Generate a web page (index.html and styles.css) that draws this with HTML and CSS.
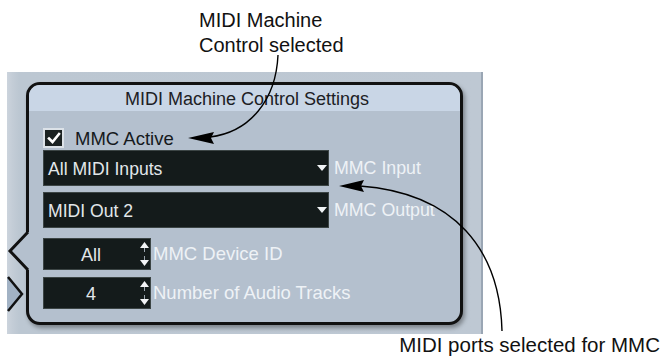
FILE: index.html
```html
<!DOCTYPE html>
<html>
<head>
<meta charset="utf-8">
<link rel="stylesheet" href="styles.css">
</head>
<body>
<div class="page">
  <div class="note-top">MIDI Machine<br>Control selected</div>
  <div class="panel">
    <div class="box">
      <div class="box-title">MIDI Machine Control Settings</div>
      <div class="box-body">
        <div class="check-row">
          <span class="check">
            <svg width="14" height="14" viewBox="0 0 14 14"><path d="M2 7.5 L5.5 11 L12 3" fill="none" stroke="#ffffff" stroke-width="2.6" stroke-linecap="square"/></svg>
          </span>
          <span class="check-label">MMC Active</span>
        </div>
        <div class="field-row select-row">
          <div class="select"><span class="select-val">All MIDI Inputs</span><span class="caret"></span></div>
          <span class="label">MMC Input</span>
        </div>
        <div class="field-row select-row second">
          <div class="select"><span class="select-val">MIDI Out 2</span><span class="caret"></span></div>
          <span class="label">MMC Output</span>
        </div>
        <div class="field-row spin-row">
          <div class="spin"><span class="spin-val">All</span>
            <svg class="spin-btns" width="12" height="30" viewBox="0 0 12 30"><path d="M2 9 L6.5 3 L11 9 Z" fill="#f2f4f6"/><path d="M6.5 9 V13" stroke="#9aa4ad" stroke-width="1"/><path d="M2 21 L6.5 27 L11 21 Z" fill="#f2f4f6"/><path d="M6.5 17 V21" stroke="#9aa4ad" stroke-width="1"/></svg>
          </div>
          <span class="label">MMC Device ID</span>
        </div>
        <div class="field-row spin-row second">
          <div class="spin"><span class="spin-val">4</span>
            <svg class="spin-btns" width="12" height="30" viewBox="0 0 12 30"><path d="M2 9 L6.5 3 L11 9 Z" fill="#f2f4f6"/><path d="M6.5 9 V13" stroke="#9aa4ad" stroke-width="1"/><path d="M2 21 L6.5 27 L11 21 Z" fill="#f2f4f6"/><path d="M6.5 17 V21" stroke="#9aa4ad" stroke-width="1"/></svg>
          </div>
          <span class="label">Number of Audio Tracks</span>
        </div>
      </div>
    </div>
  </div>
  <div class="note-bottom">MIDI ports selected for MMC</div>
  <svg class="overlay" width="661" height="357" viewBox="0 0 661 357">
    <!-- left notch "<" -->
    <polygon points="31,232 27,232 10,251 27,270 31,270" fill="#b4c0ce"/>
    <polyline points="28,232 10,251 28,270" fill="none" stroke="#111" stroke-width="3" stroke-linejoin="miter"/>
    <!-- right pointing tab ">" -->
    <polygon points="7,277 22,294 7,311" fill="#a2b2c4"/>
    <polyline points="8,277 22,294 8,311" fill="none" stroke="#111" stroke-width="2.5"/>
    <!-- arrow 1 -->
    <path d="M278 55 C 276 100, 250 132, 210 137" fill="none" stroke="#000" stroke-width="1.4"/>
    <polygon points="188,138 214,132 211,138 214,144" fill="#000"/>
    <!-- arrow 2 -->
    <path d="M502 331 C 500 250, 455 193, 360 186" fill="none" stroke="#000" stroke-width="1.4"/>
    <polygon points="339,186 364,180 361,186 364,192" fill="#000"/>
  </svg>
</div>
</body>
</html>
```
FILE: styles.css
```css
html, body {
  margin: 0;
  padding: 0;
  background: #ffffff;
}
.page {
  position: relative;
  width: 661px;
  height: 357px;
  overflow: hidden;
  font-family: "Liberation Sans", Arial, sans-serif;
}
.note-top {
  box-sizing: border-box;
  height: 72px;
  padding: 8px 0 0 199px;
  font-size: 20px;
  line-height: 25px;
  color: #111;
}
.panel {
  box-sizing: border-box;
  margin-left: 7px;
  width: 476px;
  height: 262px;
  padding: 10px 18px 9px 19px;
  background: linear-gradient(to right, #ccd4dd 0, #c4cdd7 5px, #bcc7d2 12px, #bec8d3 100%);
  border-right: 2px solid #9aa6b4;
}
.box {
  box-sizing: border-box;
  height: 243px;
  border: 3px solid #111;
  border-radius: 14px;
  background: #b4c0ce;
  overflow: hidden;
  box-shadow: 2px 3px 4px rgba(0, 0, 0, 0.35);
}
.box-title {
  height: 26px;
  line-height: 29px;
  background: #c9d6e6;
  text-align: center;
  font-size: 18px;
  color: #1c2024;
  padding-left: 5px;
}
.box-body {
  display: flex;
  flex-direction: column;
  padding: 17px 0 0 14px;
}
.check-row {
  display: flex;
  align-items: center;
  height: 20px;
  gap: 11px;
  margin-bottom: 2px;
}
.check {
  box-sizing: border-box;
  width: 21px;
  height: 20px;
  border: 2px solid #dce2e8;
  background: #1b2222;
  display: flex;
  align-items: center;
  justify-content: center;
}
.check-label {
  font-size: 18.5px;
  color: #15191c;
  position: relative;
  top: 1px;
}
.field-row {
  display: flex;
  align-items: center;
}
.select-row.second {
  margin-top: 6px;
}
.select {
  box-sizing: border-box;
  width: 286px;
  height: 36px;
  background: #141b1b;
  border: 1px solid #3c4545;
  display: flex;
  align-items: center;
  justify-content: space-between;
  padding: 0 0 0 4px;
}
.select-val {
  font-size: 17.6px;
  color: #e2e7ea;
  position: relative;
  top: 1px;
}
.caret {
  width: 0;
  height: 0;
  border-left: 5px solid transparent;
  border-right: 5px solid transparent;
  border-top: 6px solid #f0f3f5;
  margin-right: 1px;
}
.label {
  font-size: 17.8px;
  color: #eef2f6;
  margin-left: 5px;
  white-space: nowrap;
}
.spin-row {
  margin-top: 10px;
}
.spin-row.second {
  margin-top: 7px;
}
.spin {
  box-sizing: border-box;
  width: 108px;
  height: 32px;
  background: #141b1b;
  border: 1px solid #3c4545;
  display: flex;
  align-items: center;
}
.spin-val {
  flex: 1;
  text-align: center;
  font-size: 18px;
  color: #e2e7ea;
  position: relative;
  top: 1px;
}
.spin-btns {
  display: block;
  margin-right: 0;
}
.spin-row .label {
  margin-left: 2px;
  font-size: 18.5px;
}
.note-bottom {
  margin-top: -2px;
  padding-right: 1px;
  text-align: right;
  font-size: 20.5px;
  line-height: 25px;
  color: #111;
}
.overlay {
  position: absolute;
  left: 0;
  top: 0;
  pointer-events: none;
}
```
